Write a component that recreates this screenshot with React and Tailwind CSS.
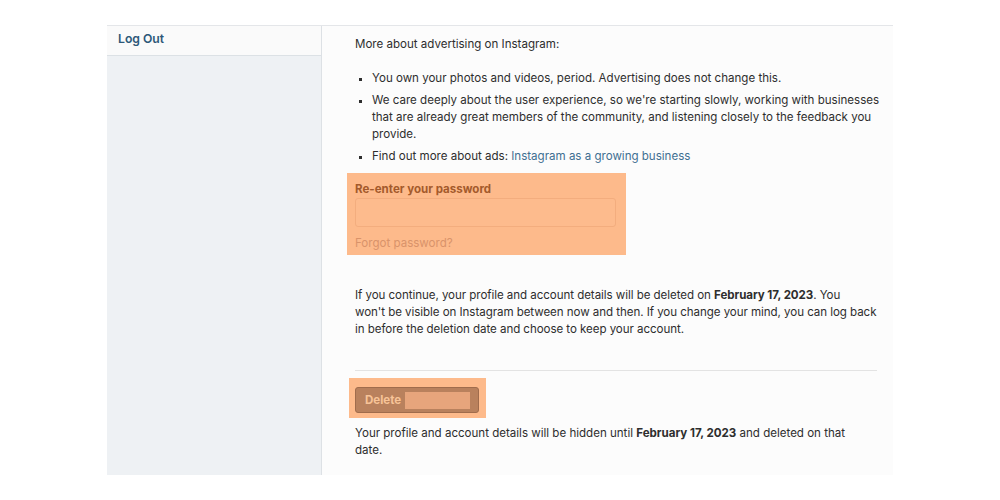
import React from "react";

export default function App() {
  return (
    <div
      className="w-[1000px] h-[500px] bg-white pt-[25px] pl-[107px] text-[#2e2e2e]"
      style={{ fontFamily: "Inter, 'Liberation Sans', sans-serif" }}
    >
      <div className="flex w-[786px] h-[450px] border-t border-[#e4e6e9] bg-[#fcfcfc]">
        <aside className="w-[215px] shrink-0 border-r border-[#dde1e5] bg-[#eef1f4]">
          <div className="h-[30px] bg-[#fafafa] border-b border-[#dce1e5] pl-[11px] pt-[4px] text-[12.2px] leading-[17px] font-semibold text-[#2d5878]">
            Log Out
          </div>
        </aside>
        <main className="flex-1 pl-[33px] pt-[10px] text-[11.55px] leading-[17px] whitespace-nowrap">
          <p>More about advertising on Instagram:</p>
          <ul className="mt-[17px] pl-[17px] list-[square] flex flex-col gap-[5px] marker:text-[10px]">
            <li>You own your photos and videos, period. Advertising does not change this.</li>
            <li>
              We care deeply about the user experience, so we're starting slowly, working with businesses
              <br />
              that are already great members of the community, and listening closely to the feedback you
              <br />
              provide.
            </li>
            <li>
              Find out more about ads: <span className="text-[#3f6f92]">Instagram as a growing business</span>
            </li>
          </ul>
          <div className="mt-[8px] -ml-[8px] w-[279px] h-[82px] bg-[#fdba8b] pl-[8px] pr-[10px] pt-[8px]">
            <div className="font-bold text-[#a45a2c]">Re-enter your password</div>
            <div className="h-[29px] w-[261px] rounded-[3px] border border-[#f3ad7e] bg-[#fdbb8d]"></div>
            <div className="mt-[8px] text-[#d9936a]">Forgot password?</div>
          </div>
          <p className="mt-[32px] tracking-[-0.05px]">
            If you continue, your profile and account details will be deleted on <b>February 17, 2023</b>. You
            <br />
            won't be visible on Instagram between now and then. If you change your mind, you can log back
            <br />
            in before the deletion date and choose to keep your account.
          </p>
          <div className="mt-[32px] mr-[16px] border-t border-[#e3e3e3]"></div>
          <div className="mt-[7px] -ml-[6px] w-[137px] h-[40px] bg-[#fdba8b] pl-[6px] pt-[9px]">
            <div className="flex items-center h-[26px] w-[124px] rounded-[3px] border border-[#a06c4c] bg-[#b9815d] pl-[9px] pr-[8px]">
              <span className="font-bold text-[#f7c397]">Delete</span>
              <span className="ml-[4px] h-[17px] flex-1 bg-[#e7a57c]"></span>
            </div>
          </div>
          <p className="mt-[7px]">
            Your profile and account details will be hidden until <b>February 17, 2023</b> and deleted on that
            <br />
            date.
          </p>
        </main>
      </div>
    </div>
  );
}
